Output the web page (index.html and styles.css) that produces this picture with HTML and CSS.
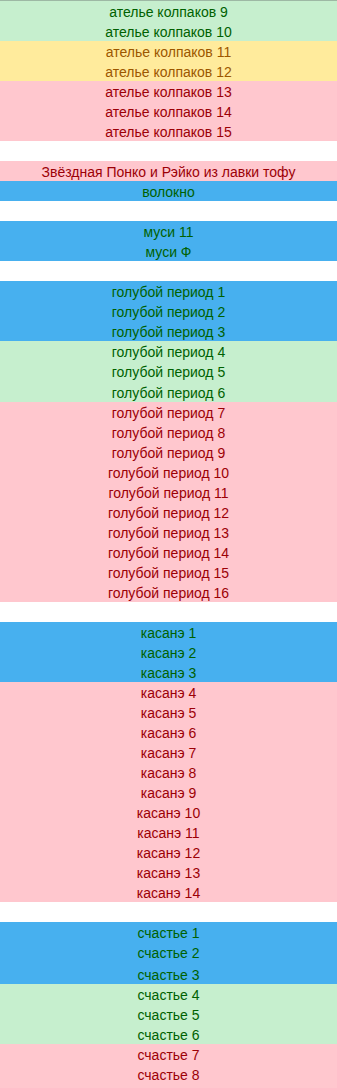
FILE: index.html
```html
<!DOCTYPE html>
<html lang="ru">
<head>
<meta charset="utf-8">
<title>Список</title>
<link rel="stylesheet" href="styles.css">
</head>
<body>
<div class="sheet">
  <div class="row good">ателье колпаков 9</div>
  <div class="row good">ателье колпаков 10</div>
  <div class="row neutral">ателье колпаков 11</div>
  <div class="row neutral">ателье колпаков 12</div>
  <div class="row bad">ателье колпаков 13</div>
  <div class="row bad">ателье колпаков 14</div>
  <div class="row bad">ателье колпаков 15</div>
  <div class="row gap"></div>
  <div class="row bad">Звёздная Понко и Рэйко из лавки тофу</div>
  <div class="row blue">волокно</div>
  <div class="row gap"></div>
  <div class="row blue">муси 11</div>
  <div class="row blue">муси Ф</div>
  <div class="row gap"></div>
  <div class="row blue">голубой период 1</div>
  <div class="row blue">голубой период 2</div>
  <div class="row blue">голубой период 3</div>
  <div class="row good">голубой период 4</div>
  <div class="row good">голубой период 5</div>
  <div class="row good h21">голубой период 6</div>
  <div class="row bad">голубой период 7</div>
  <div class="row bad">голубой период 8</div>
  <div class="row bad">голубой период 9</div>
  <div class="row bad">голубой период 10</div>
  <div class="row bad">голубой период 11</div>
  <div class="row bad">голубой период 12</div>
  <div class="row bad">голубой период 13</div>
  <div class="row bad">голубой период 14</div>
  <div class="row bad">голубой период 15</div>
  <div class="row bad">голубой период 16</div>
  <div class="row gap"></div>
  <div class="row blue">касанэ 1</div>
  <div class="row blue">касанэ 2</div>
  <div class="row blue">касанэ 3</div>
  <div class="row bad">касанэ 4</div>
  <div class="row bad">касанэ 5</div>
  <div class="row bad">касанэ 6</div>
  <div class="row bad">касанэ 7</div>
  <div class="row bad">касанэ 8</div>
  <div class="row bad">касанэ 9</div>
  <div class="row bad">касанэ 10</div>
  <div class="row bad">касанэ 11</div>
  <div class="row bad">касанэ 12</div>
  <div class="row bad">касанэ 13</div>
  <div class="row bad">касанэ 14</div>
  <div class="row gap"></div>
  <div class="row blue">счастье 1</div>
  <div class="row blue">счастье 2</div>
  <div class="row blue h22">счастье 3</div>
  <div class="row good">счастье 4</div>
  <div class="row good">счастье 5</div>
  <div class="row good">счастье 6</div>
  <div class="row bad">счастье 7</div>
  <div class="row bad">счастье 8</div>
  <div class="row bad"></div>
</div>
</body>
</html>
```
FILE: styles.css
```css
html, body {
  margin: 0;
  padding: 0;
  background: #ffffff;
}
.sheet {
  display: flex;
  flex-direction: column;
  width: 337px;
  height: 1088px;
  overflow: hidden;
  border-top: 1px solid #9db8a4;
  font-family: "Liberation Sans", Arial, sans-serif;
  font-size: 14px;
}
.row {
  flex: 0 0 20px;
  height: 20px;
  box-sizing: border-box;
  padding-top: 3px;
  line-height: 17px;
  text-align: center;
  white-space: nowrap;
}
.row.h21 {
  flex-basis: 21px;
  height: 21px;
  padding-top: 4px;
}
.row.h22 {
  flex-basis: 22px;
  height: 22px;
  padding-top: 5px;
}
.good {
  background: #c6efce;
  color: #006100;
}
.neutral {
  background: #ffeb9c;
  color: #9c5700;
}
.bad {
  background: #ffc7ce;
  color: #9c0006;
}
.blue {
  background: #47b0ef;
  color: #006100;
}
.gap {
  background: #ffffff;
}
```
